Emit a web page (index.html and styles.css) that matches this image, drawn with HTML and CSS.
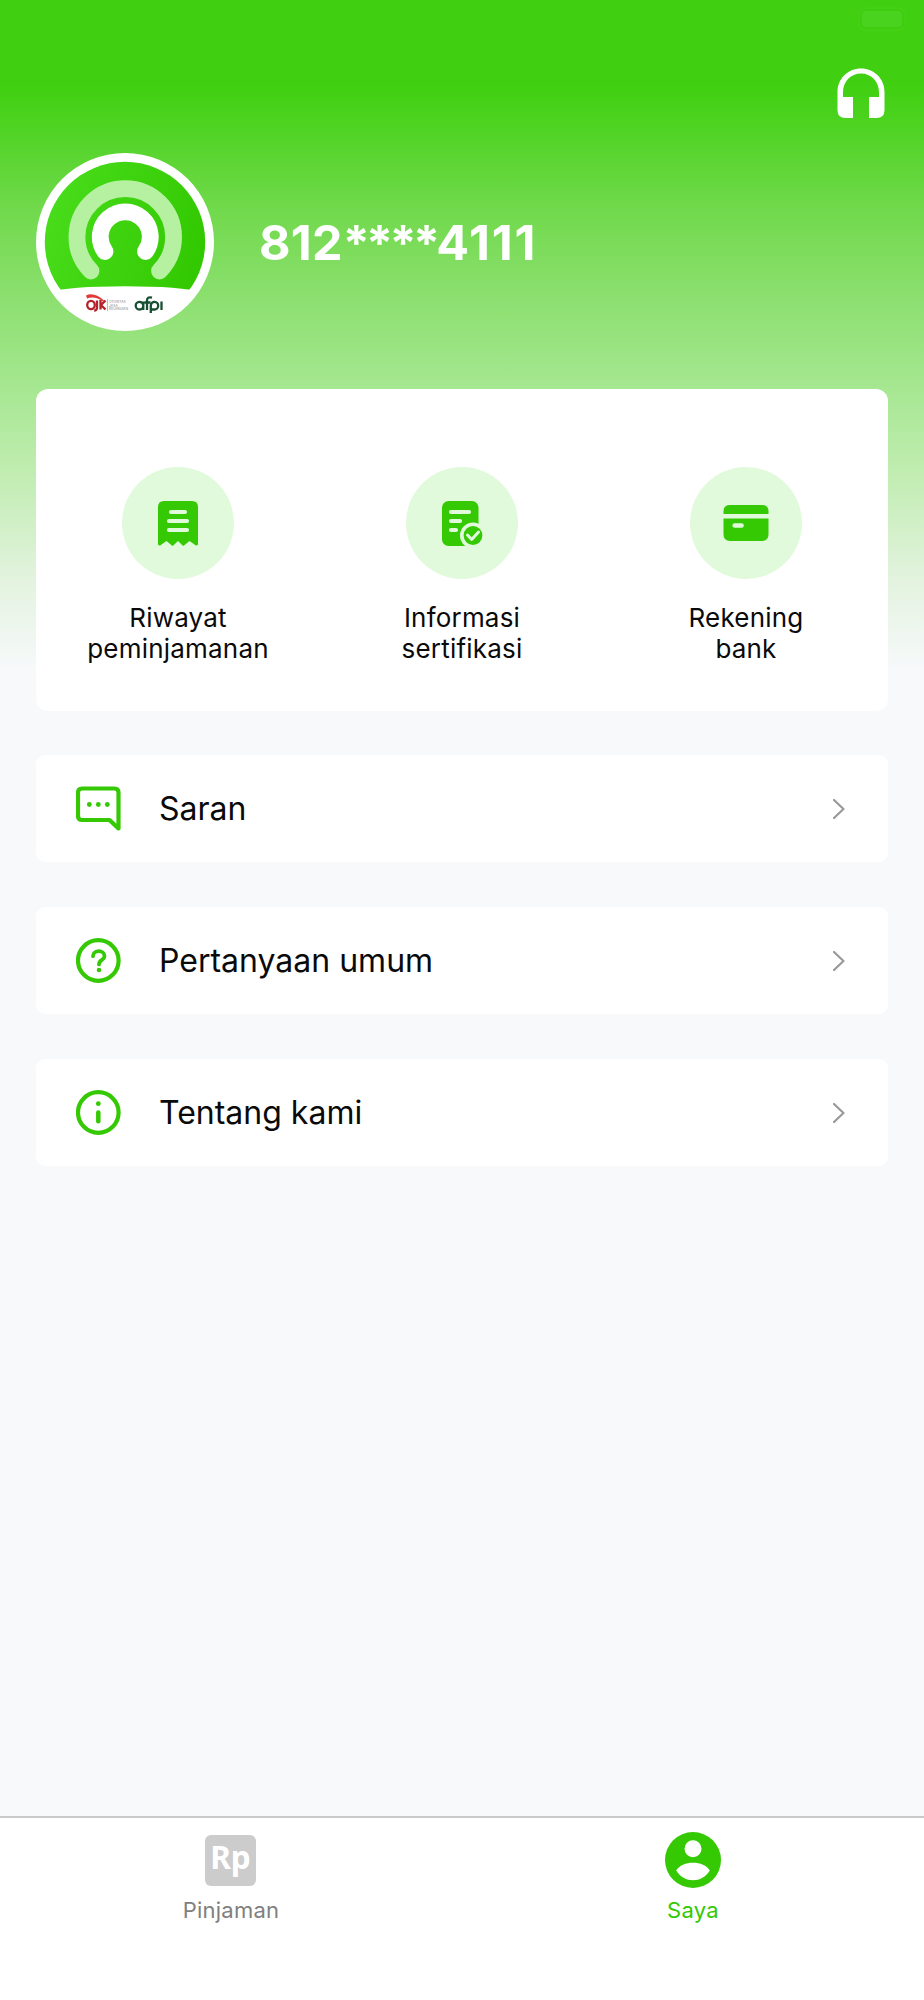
FILE: index.html
```html
<!DOCTYPE html>
<html lang="id">
<head>
<meta charset="utf-8">
<title>Saya</title>
<link rel="stylesheet" href="styles.css">
</head>
<body>
<div class="screen">
  <header class="top">
    <span class="status-pill"></span>
    <svg class="headset" width="48" height="50" viewBox="0 0 48 50"><path fill="#fff" d="M.5 42V24C.5 10.500 11 0.500 24 .5S47.500 10.500 47.500 24v18q0 8-8 8H32V29h10v-5C42 13.500 34 5.500 24 5.500S6 13.500 6 24v5h10v21H8.500Q.5 50 .5 42z"/></svg>
  </header>

  <section class="profile">
    <svg class="avatar" width="178" height="178" viewBox="0 0 178 178">
      <defs>
        <linearGradient id="disc" x1="0" y1="0.300" x2="1" y2="0.550"><stop offset="0" stop-color="#4ade1d"/><stop offset="1" stop-color="#32c800"/></linearGradient>
        <clipPath id="inner"><circle cx="89" cy="89" r="80.200"/></clipPath>
      </defs>
      <circle cx="89" cy="89" r="89" fill="#fff"/>
      <path clip-path="url(#inner)" fill="url(#disc)" d="M0 0H178V142Q154 133.200 89 133.200T0 142z"/>
      <g fill="none" stroke-linecap="round" stroke-width="16.800">
        <path stroke="#b6f1a2" d="M55 118A48.300 48.300 0 1 1 123.500 118"/>
        <path stroke="#fff" d="M69 98.500A25 25 0 1 1 109.500 98.500"/>
      </g>
      <path d="M50 142.500q8-4 18 5l-1 1q-8-6-16-3z" fill="#e03b36"/>
      <g fill="none" stroke-width="2.300">
        <ellipse cx="55" cy="152" rx="3.800" ry="4.200" stroke="#b4232c"/>
        <path stroke="#b4232c" d="M61 147.500v7q0 3-2.800 3M64.500 147v9.500M69.500 147.500l-4.500 4.500l4.500 4.500"/>
        <path stroke="#174f33" d="M107.300 152.500a3.800 3.800 0 1 0-3.800 4q3.800 0 3.800-4zM107.300 148.500v8.500M111 157v-9.500q0-4 5-2.800M108.500 149.500h6M114.800 160v-7.500a3.700 3.800 0 1 1 3.700 4h-3M125.500 148.500v8.500"/>
      </g>
      <path d="M71.500 146v12" stroke="#c98a8a" stroke-width=".7"/>
      <text class="ojk" x="73" y="150">OTORITAS</text>
      <text class="ojk" x="73" y="153.500">JASA</text>
      <text class="ojk" x="73" y="157">KEUANGAN</text>
    </svg>
    <div class="phone">812<span class="mask">****</span><span class="tail">4111</span></div>
  </section>

  <main class="content">
    <nav class="card">
      <a class="shortcut">
        <svg class="badge" width="112" height="112" viewBox="0 0 112 112">
          <path fill="#34c903" d="M36 40q0-6 6-6H70q6 0 6 6V77.500q-1.500 2-3.500 0L67.500 74L62 78.500q-.7.700-1.400 0L56 74L51.300 78.500q-.7.700-1.400 0L44.500 74L39.500 77.500q-2 2-3.500 0z"/>
          <path d="M49 45H63M47 54H65M47 63H65" stroke="#e1fadb" stroke-width="4.200" stroke-linecap="round"/>
        </svg>
        <span>Riwayat<br>peminjamanan</span>
      </a>
      <a class="shortcut">
        <svg class="badge" width="112" height="112" viewBox="0 0 112 112">
          <rect x="36" y="34" width="36.500" height="45" rx="6.500" fill="#34c903"/>
          <path d="M45 45H63M45 54H54M45 63H50" stroke="#e1fadb" stroke-width="4.200" stroke-linecap="round"/>
          <circle cx="67" cy="68.500" r="11.200" fill="#34c903" stroke="#e1fadb" stroke-width="3.600"/>
          <path d="M61.500 68L65.700 72.500L72.500 65" fill="none" stroke="#e1fadb" stroke-width="3" stroke-linecap="round" stroke-linejoin="round"/>
        </svg>
        <span>Informasi<br>sertifikasi</span>
      </a>
      <a class="shortcut">
        <svg class="badge" width="112" height="112" viewBox="0 0 112 112">
          <path fill="#34c903" d="M33.500 47V44.500q0-6.500 6.500-6.500H72q6.500 0 6.500 6.500V47zM33.500 51.500H78.500V67.500q0 6.500-6.500 6.500H40q-6.500 0-6.500-6.500z"/>
          <path d="M44.700 58.500H51.500" stroke="#e1fadb" stroke-width="4.600" stroke-linecap="round"/>
        </svg>
        <span>Rekening<br>bank</span>
      </a>
    </nav>

    <a class="row">
      <svg class="row-icon" width="46" height="46" viewBox="0.500 0 46 46"><path d="M6.500 2.500H39Q43 2.500 43 6.500V42.500L34 34H6.500Q2.500 34 2.500 30V6.500Q2.500 2.500 6.500 2.500z" fill="none" stroke="#34c903" stroke-width="4.200" stroke-linejoin="round"/><g fill="#34c903"><circle cx="13.800" cy="18.500" r="2.400"/><circle cx="22.800" cy="18.500" r="2.400"/><circle cx="31.800" cy="18.500" r="2.400"/></g></svg>
      <span class="row-label">Saran</span>
      <svg class="chevron" width="14" height="22" viewBox="0 0 14 22"><path d="M2 2L11.500 11L2 20"/></svg>
    </a>
    <a class="row">
      <svg class="row-icon" width="46" height="46" viewBox="0.500 0.300 46 46"><g fill="none" stroke="#34c903" stroke-width="4.200" stroke-linecap="round"><circle cx="22.800" cy="22.800" r="20.300"/><path d="M17.500 18.500C17.500 11.800 29 11.800 29 18.500C29 22.500 23.500 22 23.500 26.700" stroke-width="3.800"/></g><circle cx="23.500" cy="32.300" r="2.300" fill="#34c903"/></svg>
      <span class="row-label">Pertanyaan umum</span>
      <svg class="chevron" width="14" height="22" viewBox="0 0 14 22"><path d="M2 2L11.500 11L2 20"/></svg>
    </a>
    <a class="row">
      <svg class="row-icon" width="46" height="46" viewBox="0.500 0.300 46 46"><g fill="none" stroke="#34c903" stroke-width="4.200" stroke-linecap="round"><circle cx="22.800" cy="22.800" r="20.300"/><path d="M22.800 22.800V31.600" stroke-width="4.500"/></g><circle cx="22.800" cy="14" r="2.400" fill="#34c903"/></svg>
      <span class="row-label">Tentang kami</span>
      <svg class="chevron" width="14" height="22" viewBox="0 0 14 22"><path d="M2 2L11.500 11L2 20"/></svg>
    </a>
  </main>

  <footer class="tabs">
    <a class="tab">
      <span class="tab-icon"><span class="rp">Rp</span></span>
      <span class="tab-label">Pinjaman</span>
    </a>
    <a class="tab active">
      <span class="tab-icon"><svg width="56" height="56" viewBox="0 0 56 56"><circle cx="28" cy="28" r="28" fill="#34c903"/><circle cx="28" cy="16.800" r="8.500" fill="#fff"/><path d="M11.200 38.500C17 28 39 28 44.800 38.500C37 51.500 19 51.500 11.200 38.500z" fill="#fff"/></svg></span>
      <span class="tab-label">Saya</span>
    </a>
  </footer>
</div>
</body>
</html>
```
FILE: styles.css
```css
* { box-sizing: border-box; }
body { margin: 0; font-family: Inter, "Liberation Sans", sans-serif; color: #0a0a0a; }
svg { display: block; flex: none; }
.screen {
  width: 924px; height: 2000px; display: flex; flex-direction: column;
  background: linear-gradient(180deg, #41d011 0, #41d011 85px, #4ad21d 115px, #6fd94a 205px, #8ee072 305px, #a5e790 385px, #c3edb4 480px, #e3f3df 580px, #f7f9fb 670px) #f7f9fb;
}
.top { position: relative; height: 153px; display: flex; justify-content: flex-end; padding: 68px 39px 0 0; }
.status-pill { position: absolute; top: 11px; right: 22px; width: 40px; height: 16px; border-radius: 4px; background: #4ad31e; box-shadow: 0 0 0 2px #3fcd10, 0 0 0 4px #44d015; }
.profile { display: flex; align-items: center; height: 178px; padding-left: 36px; }
.avatar { margin-right: 45px; }
.ojk { font-size: 3.400px; fill: #888; }
.phone { color: #fff; font-size: 48.500px; line-height: 58px; font-weight: 700; letter-spacing: .2px; padding-top: 2px; }
.mask { letter-spacing: -3.700px; }
.tail { letter-spacing: 1.800px; }
.content { flex: 1; padding: 58px 36px 0; }
.card { height: 322px; border-radius: 12px; background: #fff; display: grid; grid-template-columns: repeat(3, 1fr); padding-top: 78px; }
.shortcut { display: flex; flex-direction: column; align-items: center; text-align: center; font-size: 26px; line-height: 31px; letter-spacing: .2px; gap: 23px; }
.badge { border-radius: 50%; background: #e1fadb; }
.row { height: 107px; margin-top: 45px; padding: 0 42px 0 40px; background: #fff; border-radius: 9px; display: flex; align-items: center; }
.card + .row { margin-top: 44px; }
.row-label { flex: 1; margin-left: 37px; font-size: 32px; line-height: 40px; }
.chevron path { fill: none; stroke: #999; stroke-width: 2.200; stroke-linecap: round; stroke-linejoin: round; }
.tabs { height: 184px; border-top: 2px solid #cacaca; background: #fff; display: flex; }
.tab { flex: 1; display: flex; flex-direction: column; align-items: center; padding-top: 14px; color: #808080; }
.tab.active { color: #34c903; }
.tab-icon { height: 56px; display: flex; align-items: center; }
.rp { width: 51px; height: 51px; margin-right: 1px; border-radius: 6px; background: #ccc; color: #fff; font: 700 31.500px/44px "Noto Sans", sans-serif; text-align: center; }
.tab-label { margin-top: 9px; font-size: 22px; line-height: 26px; letter-spacing: .25px; }
```
